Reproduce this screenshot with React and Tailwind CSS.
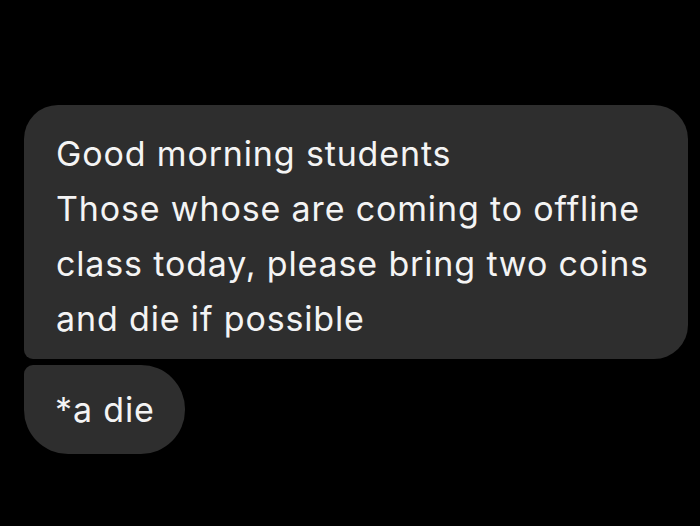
import React from 'react'

const lines = [
  'Good morning students',
  'Those whose are coming to offline',
  'class today, please bring two coins',
  'and die if possible',
]

export default function App() {
  return (
    <div className="w-full h-[526px] bg-black overflow-hidden pt-[105px] pl-[24px]" style={{ fontFamily: 'Inter, "Noto Sans", sans-serif' }}>
      <div className="flex flex-col items-start gap-[6px]">
        <div className="w-[664px] h-[254px] bg-[#2e2e2e] rounded-[34px] rounded-bl-[9px] pl-[32px] pt-[21px] text-[#f4f4f4] text-[34px] leading-[55px] tracking-[0.85px]">
          {lines.map((l) => (
            <div key={l} className="whitespace-nowrap">{l}</div>
          ))}
        </div>
        <div className="h-[89px] bg-[#2e2e2e] rounded-[44px] rounded-tl-[9px] pl-[31px] pr-[30px] flex items-center text-[#f4f4f4] text-[34px] tracking-[0.85px]">
          *a die
        </div>
      </div>
    </div>
  )
}
